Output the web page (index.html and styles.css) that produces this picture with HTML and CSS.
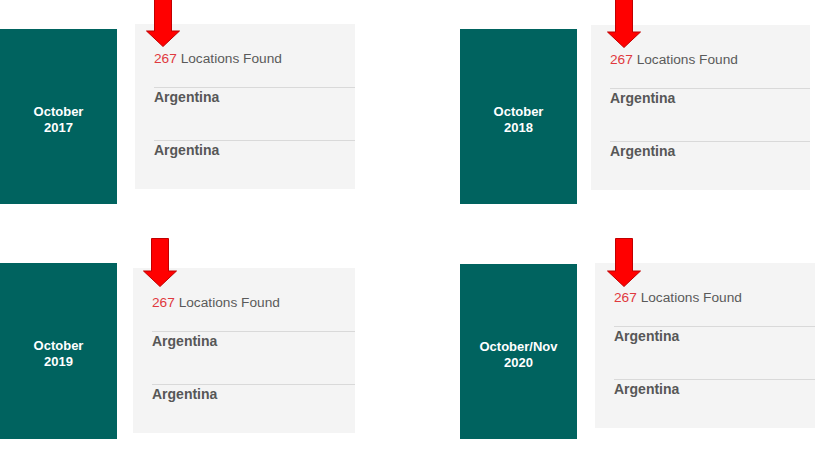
FILE: index.html
```html
<!DOCTYPE html>
<html lang="en">
<head>
    <meta charset="UTF-8">
    <meta name="viewport" content="width=device-width, initial-scale=1.0">
    <title>Locations by Month</title>
    <link rel="stylesheet" href="styles.css">
</head>
<body>
    <div class="board">
        <div class="panel panel-a">
            <svg class="arrow" viewBox="0 0 34 49" width="34" height="49"><polygon points="8.5,0.5 25.5,0.5 25.5,33 33.5,33 17,48.5 0.5,33 8.5,33"/></svg>
            <div class="date">October<br>2017</div>
            <div class="card">
                <div class="count"><span class="num">267</span> Locations Found</div>
                <div class="row">Argentina</div>
                <div class="row">Argentina</div>
            </div>
        </div>
        <div class="panel panel-b">
            <svg class="arrow" viewBox="0 0 34 49" width="34" height="49"><polygon points="8.5,0.5 25.5,0.5 25.5,33 33.5,33 17,48.5 0.5,33 8.5,33"/></svg>
            <div class="date">October<br>2018</div>
            <div class="card">
                <div class="count"><span class="num">267</span> Locations Found</div>
                <div class="row">Argentina</div>
                <div class="row">Argentina</div>
            </div>
        </div>
        <div class="panel panel-c">
            <svg class="arrow" viewBox="0 0 34 49" width="34" height="49"><polygon points="8.5,0.5 25.5,0.5 25.5,33 33.5,33 17,48.5 0.5,33 8.5,33"/></svg>
            <div class="date">October<br>2019</div>
            <div class="card">
                <div class="count"><span class="num">267</span> Locations Found</div>
                <div class="row">Argentina</div>
                <div class="row">Argentina</div>
            </div>
        </div>
        <div class="panel panel-d">
            <svg class="arrow" viewBox="0 0 34 49" width="34" height="49"><polygon points="8.5,0.5 25.5,0.5 25.5,33 33.5,33 17,48.5 0.5,33 8.5,33"/></svg>
            <div class="date">October/Nov<br>2020</div>
            <div class="card">
                <div class="count"><span class="num">267</span> Locations Found</div>
                <div class="row">Argentina</div>
                <div class="row">Argentina</div>
            </div>
        </div>
    </div>
</body>
</html>
```

FILE: styles.css
```css
* {
    margin: 0;
    padding: 0;
    box-sizing: border-box;
    font-family: 'Liberation Sans', Arial, sans-serif;
}

body {
    background: #ffffff;
    width: 831px;
    height: 454px;
    overflow: hidden;
}

.board {
    display: grid;
    grid-template-columns: 460px 371px;
    grid-template-rows: 234px 220px;
}

.panel {
    position: relative;
    display: flex;
    align-items: flex-start;
}

.arrow {
    position: absolute;
    left: 146px;
    top: -2px;
    z-index: 2;
}

.arrow polygon {
    fill: #ff0000;
    stroke: #c00000;
    stroke-width: 1;
}

.date {
    width: 117px;
    height: 175px;
    margin-top: 29px;
    background: #00635f;
    color: #ffffff;
    font-weight: bold;
    font-size: 13px;
    line-height: 16px;
    text-align: center;
    display: flex;
    align-items: center;
    justify-content: center;
    padding-top: 6px;
    flex-shrink: 0;
}

.card {
    width: 220px;
    height: 165px;
    margin-top: 24px;
    margin-left: 18px;
    padding: 27px 0 0 19px;
    background: #f4f4f4;
}

.count {
    font-size: 13.7px;
    line-height: 16px;
    color: #5a5a5a;
    margin-bottom: 20px;
}

.num {
    color: #e0393e;
}

.row {
    height: 53px;
    border-top: 1px solid #d9d9d9;
    padding-top: 1px;
    font-size: 14px;
    line-height: 16px;
    font-weight: bold;
    color: #575757;
}

/* each panel was captured with a slightly different offset */
.panel-b .card {
    margin-top: 25px;
    margin-left: 14px;
    width: 219px;
}

.panel-b .arrow {
    left: 147px;
    top: -1px;
}

.panel-c .date {
    margin-top: 29px;
    height: 176px;
}

.panel-c .card {
    margin-top: 34px;
    margin-left: 16px;
    width: 222px;
}

.panel-c .arrow {
    left: 143px;
    top: 4px;
}

.panel-d .date {
    margin-top: 30px;
}

.panel-d .card {
    margin-top: 29px;
    margin-left: 18px;
}

.panel-d .arrow {
    left: 147px;
    top: 4px;
}
```
